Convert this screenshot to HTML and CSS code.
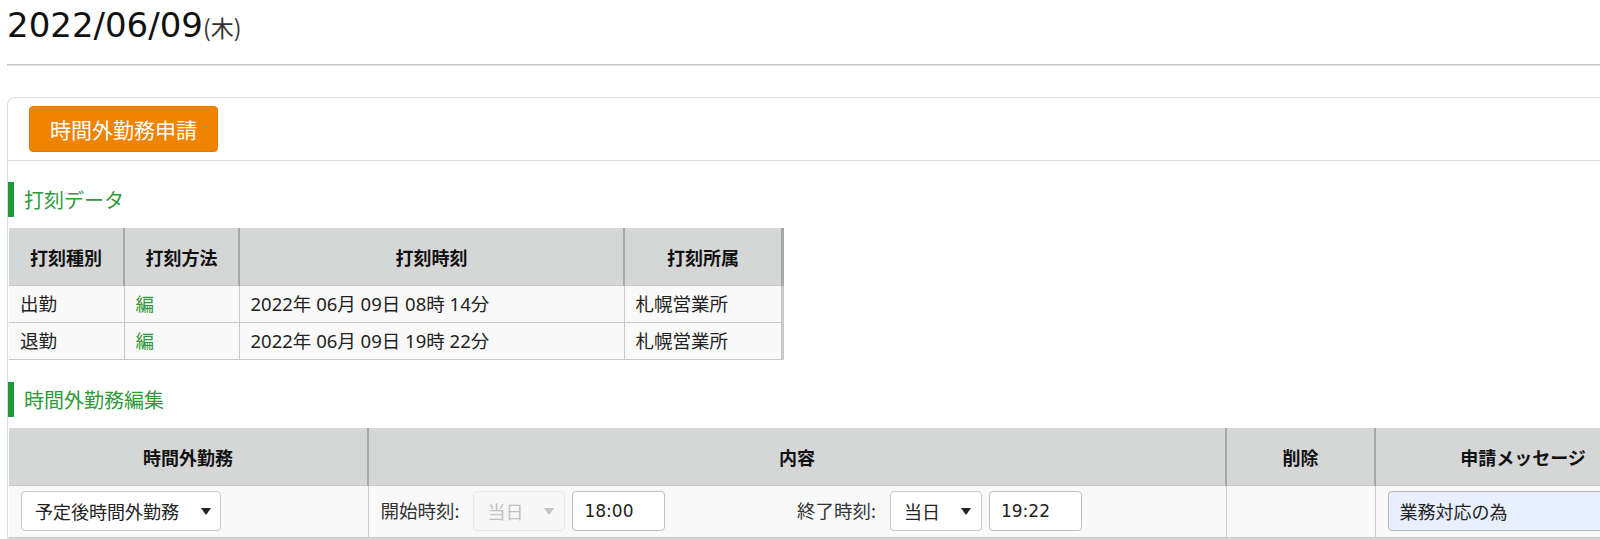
FILE: index.html
```html
<!DOCTYPE html>
<html lang="ja">
<head>
    <meta charset="UTF-8">
    <meta name="viewport" content="width=device-width, initial-scale=1.0">
    <title>時間外勤務申請</title>
    <link rel="stylesheet" href="styles.css">
</head>
<body>
    <h1 class="hizuke">2022/06/09<span class="youbi">(木)</span></h1>
    <hr class="sen">
    <div class="waku">
        <div class="waku-tete">
            <button type="button" class="shinsei">時間外勤務申請</button>
        </div>
        <h2 class="midashi midashi-1">打刻データ</h2>
        <table class="hyou dakoku">
            <tr>
                <th class="c1">打刻種別</th>
                <th class="c2">打刻方法</th>
                <th class="c3">打刻時刻</th>
                <th class="c4">打刻所属</th>
            </tr>
            <tr>
                <td>出勤</td>
                <td><a href="#" class="hen">編</a></td>
                <td>2022年 06月 09日 08時 14分</td>
                <td>札幌営業所</td>
            </tr>
            <tr>
                <td>退勤</td>
                <td><a href="#" class="hen">編</a></td>
                <td>2022年 06月 09日 19時 22分</td>
                <td>札幌営業所</td>
            </tr>
        </table>
        <h2 class="midashi midashi-2">時間外勤務編集</h2>
        <table class="hyou henshu">
            <tr>
                <th class="k1">時間外勤務</th>
                <th class="k2">内容</th>
                <th class="k3">削除</th>
                <th class="k4">申請メッセージ</th>
            </tr>
            <tr>
                <td>
                    <div class="erabu erabu-shurui">
                        <select>
                            <option>予定後時間外勤務</option>
                        </select>
                    </div>
                </td>
                <td class="naiyou">
                    <div class="kumi">
                        <label>開始時刻:</label>
                        <div class="erabu erabu-hi kinshi">
                            <select disabled>
                                <option>当日</option>
                            </select>
                        </div>
                        <input type="text" class="jikoku" value="18:00">
                    </div>
                    <div class="kumi">
                        <label>終了時刻:</label>
                        <div class="erabu erabu-hi">
                            <select>
                                <option>当日</option>
                            </select>
                        </div>
                        <input type="text" class="jikoku" value="19:22">
                    </div>
                </td>
                <td></td>
                <td><input type="text" class="message" value="業務対応の為"></td>
            </tr>
        </table>
    </div>
</body>
</html>
```

FILE: styles.css
```css
html {
    overflow: hidden;
}
body {
    font-family: "Noto Sans", "Noto Sans CJK JP", sans-serif;
    color: #222;
    margin: 0;
    padding: 0;
    background-color: white;
}
.hizuke {
    font-family: "DejaVu Sans", sans-serif;
    font-size: 34px;
    font-weight: normal;
    line-height: 40px;
    margin: 0;
    padding: 5px 0 0 7px;
    color: #111;
}
.youbi {
    font-family: "Noto Sans CJK JP", sans-serif;
    font-size: 23px;
    color: #333;
}
.sen {
    margin: 17px 0 0 7px;
    border: none;
    border-top: 1px solid #c8c8c8;
    border-bottom: 1px solid #e6e6e6;
    height: 0;
}
.waku {
    margin: 31px 0 0 7px;
    width: 1800px;
    border: 1px solid #dcdcdc;
    border-radius: 8px 0 0 0;
}
.waku-tete {
    height: 63px;
    border-bottom: 1px solid #dcdcdc;
    padding: 8px 0 0 21px;
    box-sizing: border-box;
}
.shinsei {
    background-color: #f08300;
    color: white;
    font-family: "Noto Sans CJK JP", sans-serif;
    font-size: 21px;
    border: 1px solid #e27a00;
    border-radius: 4px;
    width: 189px;
    height: 46px;
    padding: 0;
    cursor: pointer;
}
.midashi {
    font-family: "Noto Sans CJK JP", sans-serif;
    font-size: 20px;
    font-weight: normal;
    color: #2f9a3c;
    border-left: 6px solid #1f9a3a;
    height: 35px;
    line-height: 35px;
    padding-left: 10px;
    margin: 0;
}
.midashi-1 {
    margin-top: 21px;
}
.midashi-2 {
    margin-top: 22px;
}
.hyou {
    border-collapse: collapse;
    margin: 11px 0 0 1px;
    font-size: 18.5px;
    table-layout: fixed;
}
.hyou th {
    background-color: #d5d7d6;
    font-family: "Noto Sans CJK JP", sans-serif;
    font-size: 18px;
    font-weight: bold;
    color: #111;
    height: 57px;
    padding: 0;
    border-right: 2px solid #a8a8a8;
    text-align: center;
}
.hyou td {
    background-color: #f9f9f9;
    border-top: 1px solid #c8c8c8;
    border-bottom: 1px solid #c8c8c8;
    border-right: 1px solid #c8c8c8;
    padding: 0 11px;
    height: 36px;
    line-height: 24px;
}
.dakoku {
    width: 766px;
}
.dakoku .c1 { width: 114px; }
.dakoku .c2 { width: 113px; }
.dakoku .c3 { width: 383px; }
.dakoku .c4 { width: 156px; }
.dakoku th:last-child {
    border-right: 3px solid #a8a8a8;
}
.dakoku td:last-child {
    border-right: 3px solid #c8c8c8;
}
.hen {
    color: #2f9a3c;
    text-decoration: none;
}
.henshu {
    width: 1655px;
}
.henshu .k1 { width: 358px; }
.henshu .k2 { width: 856px; }
.henshu .k3 { width: 147px; }
.henshu .k4 { width: 294px; }
.henshu td {
    height: 52px;
    padding: 5px 12px 6px 12px;
    box-sizing: border-box;
}
.henshu td.naiyou {
    font-size: 0;
}
.kumi {
    display: inline-flex;
    align-items: center;
    width: 50%;
    font-size: 18.5px;
}
.kumi label {
    color: #333;
    margin-right: 14px;
}
.erabu {
    position: relative;
    display: inline-block;
}
.erabu select {
    appearance: none;
    -webkit-appearance: none;
    font-family: "Noto Sans CJK JP", sans-serif;
    font-size: 18px;
    color: #222;
    background-color: white;
    border: 1px solid #c8c8c8;
    border-radius: 4px;
    height: 40px;
    padding: 0 0 0 13px;
    width: 100%;
    box-sizing: border-box;
}
.erabu::after {
    content: "";
    position: absolute;
    right: 11px;
    top: 17px;
    border-left: 5px solid transparent;
    border-right: 5px solid transparent;
    border-top: 7px solid #222;
    pointer-events: none;
}
.erabu-shurui {
    width: 200px;
}
.erabu-shurui::after {
    right: 10px;
}
.erabu-hi {
    width: 92px;
}
.kinshi select {
    background-color: #f7f7f7;
    border-color: #e2e2e2;
    color: #aaa;
}
.kinshi::after {
    border-top-color: #c4c4c4;
}
.jikoku {
    font-family: "DejaVu Sans", sans-serif;
    font-size: 17px;
    color: #222;
    width: 93px;
    height: 40px;
    box-sizing: border-box;
    border: 1px solid #c0c0c0;
    border-radius: 4px;
    padding: 0 11px;
    margin-left: 7px;
}
.message {
    font-family: "Noto Sans CJK JP", sans-serif;
    font-size: 18px;
    color: #222;
    background-color: #e8f0fe;
    width: 100%;
    height: 40px;
    box-sizing: border-box;
    border: 1px solid #b8b8b8;
    border-radius: 4px;
    padding: 0 11px;
}
```
